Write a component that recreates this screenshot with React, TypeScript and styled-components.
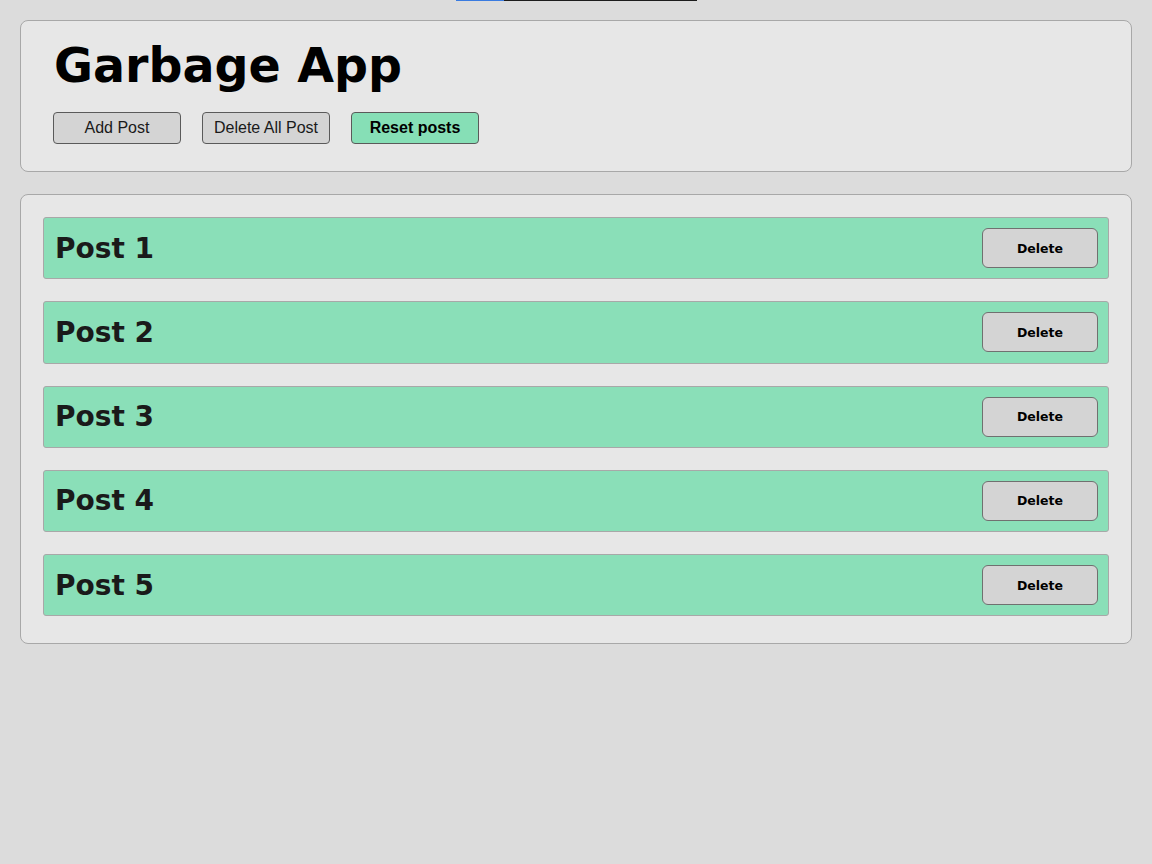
import React from "react";
import styled, { createGlobalStyle } from "styled-components";

const GlobalStyle = createGlobalStyle`
  html, body {
    margin: 0;
    padding: 0;
    background: #dcdcdc;
  }
  body {
    padding: 20px;
    font-family: "Liberation Sans", Arial, sans-serif;
  }
`;

const Progress = styled.div`
  position: fixed;
  top: 0;
  left: 456px;
  width: 241px;
  height: 1px;
  background: #1c1c1c;
  display: flex;
`;

const ProgressFill = styled.div`
  width: 48px;
  height: 100%;
  background: #3a7be0;
`;

const Card = styled.section`
  background: #e7e7e7;
  border: 1px solid #a8a8a8;
  border-radius: 8px;
`;

const HeaderCard = styled(Card)`
  padding: 14px 32px 27px;
  margin-bottom: 22px;
`;

const Title = styled.h1`
  margin: 0 0 15px 1px;
  font-family: "DejaVu Sans", Verdana, sans-serif;
  font-weight: bold;
  font-size: 47.5px;
  line-height: 62px;
  color: #000;
`;

const Toolbar = styled.div`
  display: flex;
  gap: 21px;
`;

const ToolButton = styled.button<{ $primary?: boolean }>`
  width: 128px;
  height: 32px;
  padding: 0;
  border: 1px solid #5a5a5a;
  border-radius: 4px;
  background: ${(p) => (p.$primary ? "#86dfb6" : "#d4d4d4")};
  font-family: "Liberation Sans", Arial, sans-serif;
  font-size: 16px;
  font-weight: ${(p) => (p.$primary ? "bold" : "normal")};
  color: ${(p) => (p.$primary ? "#000" : "#1a1a1a")};
`;

const PostsCard = styled(Card)`
  padding: 22px 22px 27px;
  display: flex;
  flex-direction: column;
  gap: 22px;
`;

const PostRow = styled.div`
  display: flex;
  align-items: center;
  justify-content: space-between;
  height: 60.25px;
  padding: 0 10px 0 11px;
  background: #8adfb8;
  border: 1px solid #a8a8a8;
  border-radius: 3px;
`;

const PostTitle = styled.h2`
  margin: 0;
  font-family: "DejaVu Sans", Verdana, sans-serif;
  font-weight: bold;
  font-size: 28px;
  color: #1a1a1a;
`;

const DeleteButton = styled.button`
  width: 116px;
  height: 40px;
  padding: 0;
  border: 1px solid #707070;
  border-radius: 6px;
  background: #d4d4d4;
  font-family: "DejaVu Sans", Verdana, sans-serif;
  font-weight: bold;
  font-size: 12.5px;
  color: #000;
`;

const posts = ["Post 1", "Post 2", "Post 3", "Post 4", "Post 5"];

export default function App() {
  return (
    <>
      <GlobalStyle />
      <Progress>
        <ProgressFill />
      </Progress>
      <HeaderCard>
        <Title>Garbage App</Title>
        <Toolbar>
          <ToolButton>Add Post</ToolButton>
          <ToolButton>Delete All Post</ToolButton>
          <ToolButton $primary>Reset posts</ToolButton>
        </Toolbar>
      </HeaderCard>
      <PostsCard>
        {posts.map((p) => (
          <PostRow key={p}>
            <PostTitle>{p}</PostTitle>
            <DeleteButton>Delete</DeleteButton>
          </PostRow>
        ))}
      </PostsCard>
    </>
  );
}
